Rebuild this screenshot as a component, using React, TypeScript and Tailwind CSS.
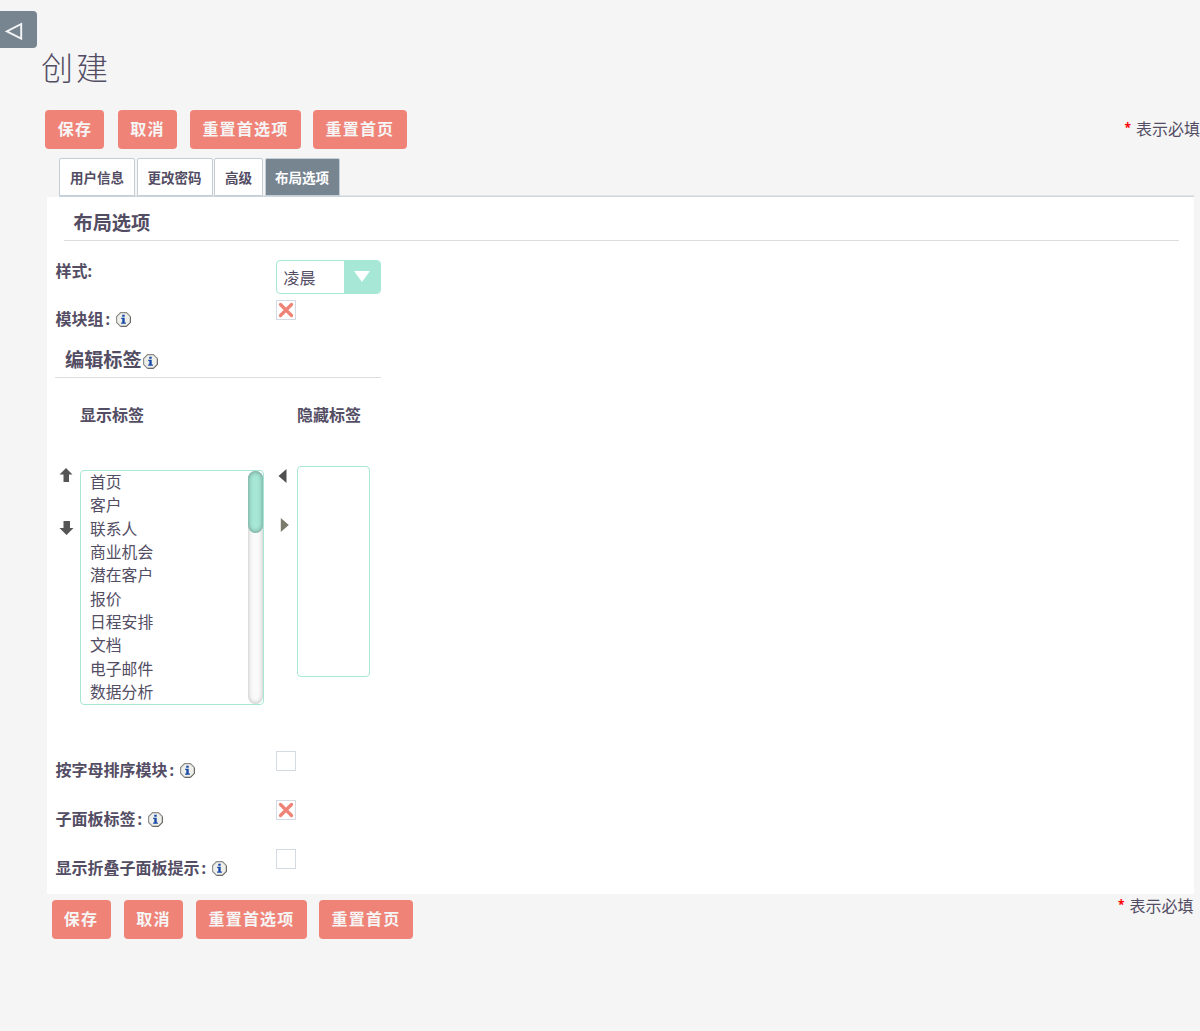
import React from "react";

const tabs = ["用户信息", "更改密码", "高级"];
const modules = ["首页", "客户", "联系人", "商业机会", "潜在客户", "报价", "日程安排", "文档", "电子邮件", "数据分析"];

function ActionButton({ label, width }: { label: string; width: string }) {
  return (
    <button className={`${width} h-[39px] shrink-0 rounded-[4px] bg-[#f08377] text-[16px] leading-[39px] font-bold tracking-[1.2px] whitespace-nowrap text-[#f5f5f5]`}>
      {label}
    </button>
  );
}

function Actions() {
  return (
    <div className="flex">
      <ActionButton label="保存" width="w-[59px] mr-[13.5px]" />
      <ActionButton label="取消" width="w-[59px] mr-[13px]" />
      <ActionButton label="重置首选项" width="w-[111px] mr-[12px]" />
      <ActionButton label="重置首页" width="w-[94px]" />
    </div>
  );
}

function Required() {
  return (
    <div className="flex h-6 text-[16px] leading-6 whitespace-nowrap">
      <span className="mr-[5px] text-[12px] leading-[21px] font-bold text-[#f00]">*</span>
      表示必填
    </div>
  );
}

function Info() {
  return (
    <svg width="15" height="15" viewBox="0 0 15 15" className="shrink-0">
      <path d="M4.6.6h5.8l4 4v5.8l-4 4H4.6l-4-4V4.6z" fill="#eeeeeb" stroke="#8b8b87" strokeWidth="1.1" />
      <path d="M14.4 5v5.4l-4 4H5" fill="none" stroke="#666" strokeWidth="1" />
      <path d="M6.2 2.8h2.5v2H6.2zM5.2 5.8h3.5v4.6h1.2v1.3H5.1v-1.3h1.2V7h-1.1z" fill="#1749a8" />
    </svg>
  );
}

function Check({ checked = false }: { checked?: boolean }) {
  return (
    <div className="flex h-5 w-5 items-center justify-center border border-[#d3dae1] bg-white">
      {checked && (
        <svg width="16" height="16" viewBox="0 0 16 16" fill="none" className="shrink-0">
          <path d="M2.5 2.5 13.5 13.5M13.5 2.5 2.5 13.5" stroke="#f08377" strokeWidth="3.3" strokeLinecap="round" />
        </svg>
      )}
    </div>
  );
}

function Field({ label, checked, height }: { label: string; checked?: boolean; height: string }) {
  return (
    <div className={`${height} flex items-start`}>
      <div className="flex w-[221px] items-center pt-[7px] pl-[0.5px] leading-6 font-bold">
        {label}
        <span className="w-[12px] pl-[2px] text-[16px]">:</span>
        <Info />
      </div>
      <Check checked={checked} />
    </div>
  );
}

export default function App() {
  return (
    <div className="flex h-[1031px] w-[1200px] flex-col overflow-hidden bg-[#f5f5f5] font-['Noto_Sans','Noto_Sans_CJK_SC',sans-serif] text-[16px] text-[#534d64]">
      <button className="mt-[11px] flex h-[37px] w-[37px] shrink-0 items-center rounded-r-[4px] bg-[#778591] pl-[5px]">
        <svg width="18" height="18" viewBox="0 0 18 18" className="mt-[3px]">
          <path d="M16.2 2v14.6L1.8 9.3z" fill="none" stroke="#f5f5f5" strokeWidth="1.9" />
        </svg>
      </button>
      <h1 className="ml-[41px] h-[62px] shrink-0 text-[32px] leading-[40px] font-light tracking-[3px]">创建</h1>
      <div className="ml-[45.4px] flex h-[48px] shrink-0 justify-between">
        <Actions />
        <div className="pt-[7px]"><Required /></div>
      </div>
      <div className="mr-[6px] ml-[59px] flex h-[39px] shrink-0 gap-[1.5px] text-[13.5px] leading-[38px] font-bold shadow-[inset_0_-1.5px_0_#cdd6dd]">
        {tabs.map((t, i) => (
          <div key={t} className={`${i === 2 ? "w-[49px]" : "w-[76px]"} h-[38px] rounded-t-[2px] border border-[#c3ced7] bg-white text-center whitespace-nowrap`}>
            {t}
          </div>
        ))}
        <div className="h-[38px] w-[75px] rounded-t-[2px] border border-[#c3ced7] bg-[#778591] text-center whitespace-nowrap text-white">布局选项</div>
      </div>

      <main className="ml-[47px] h-[697px] w-[1147px] shrink-0 bg-white pl-[8px]">
        <h2 className="ml-[9px] h-[44px] w-[1115px] border-b border-[#dddddd] pl-[9.5px] text-[19.2px] leading-[52px] font-bold">布局选项</h2>
        <div className="flex h-[59px]">
          <div className="w-[221px] pt-[18px] pl-[0.5px] leading-6 font-bold">样式:</div>
          <div className="mt-[19px] flex h-[34px] w-[105px] overflow-hidden rounded-[4px] border-[1.5px] border-[#a6e7d6]">
            <div className="flex-1 pl-[6.5px] leading-[35px]">凌晨</div>
            <div className="flex w-[36px] items-start justify-center bg-[#a6e7d6] pt-[10px]">
              <svg width="16" height="11" viewBox="0 0 16 11"><path d="M0 0h16L8 11z" fill="white" /></svg>
            </div>
          </div>
        </div>
        <Field label="模块组" checked height="h-[42px]" />
        <h3 className="flex h-[36px] w-[326px] items-center border-b border-[#dddddd] pl-[10px] text-[19.2px] leading-6 font-bold">
          <span>编辑标签</span>
          <span className="mt-[3px] ml-[1.5px]"><Info /></span>
        </h3>
        <div className="flex h-[88px] pt-[25px] pl-[25px] leading-6 font-bold">
          <div className="w-[217px]">显示标签</div>
          <div>隐藏标签</div>
        </div>
        <div className="flex h-[285px] items-start">
          <div className="flex w-[25px] flex-col gap-[39px] pt-[2px] pl-[4px] text-[#555]">
            <svg width="15" height="14" viewBox="0 0 15 14"><path d="M7 0l6.5 6.5H10V14H4.5V6.5H.5z" fill="currentColor" /></svg>
            <svg width="15" height="14" viewBox="0 0 15 14"><path d="M7.5 14l7-7H11V0H4.5v7H.5z" fill="currentColor" /></svg>
          </div>
          <div className="mt-[4px] flex h-[235px] w-[184px] justify-between overflow-hidden rounded-[4px] border border-[#a6e7d6]">
            <ul className="pl-[9px] text-[15.8px] leading-[23.35px]">
              {modules.map((m) => <li key={m}>{m}</li>)}
            </ul>
            <div className="h-full w-[15.5px] rounded-full bg-[#fafafa] shadow-[inset_0_0_5px_rgba(0,0,0,0.28)]">
              <div className="h-[62px] w-full rounded-full bg-[#a6e7d6] shadow-[inset_0_0_5px_rgba(0,0,0,0.4)]" />
            </div>
          </div>
          <div className="flex w-[33px] flex-col gap-[35px] pt-[3px] pl-[14px]">
            <svg width="9" height="14" viewBox="0 0 9 14"><path d="M8.5 0v14L.5 7z" fill="#505050" /></svg>
            <svg width="11" height="14" viewBox="0 0 11 14"><path d="M2.8 0v14L10.8 7z" fill="#7b7b6b" /></svg>
          </div>
          <div className="h-[211px] w-[73px] rounded-[4px] border border-[#a6e7d6]" />
        </div>
        <Field label="按字母排序模块" height="h-[49px]" />
        <Field label="子面板标签" checked height="h-[49px]" />
        <Field label="显示折叠子面板提示" height="h-[45px]" />
      </main>
      <div className="mr-[6.5px] ml-[51.5px] flex shrink-0 justify-between">
        <div className="pt-[6px]"><Actions /></div>
        <Required />
      </div>
    </div>
  );
}
